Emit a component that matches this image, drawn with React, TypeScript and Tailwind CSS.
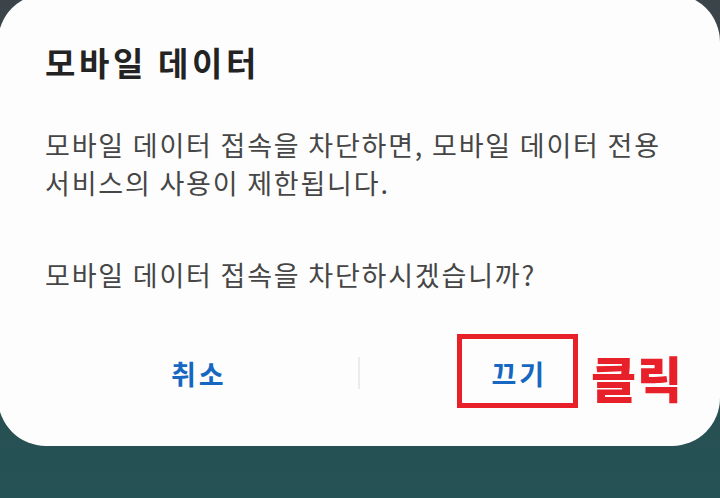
import React from "react";

const font = { fontFamily: '"Noto Sans CJK KR", "Noto Sans", sans-serif' };

export default function App() {
  return (
    <div
      className="w-[720px] h-[498px] overflow-hidden bg-gradient-to-b from-[#3b4449] via-[#2f4b4f] to-[#245255]"
      style={font}
    >
      <div className="-mt-[6px] -ml-[2px] w-[722px] h-[452px] bg-[#fdfdfd] rounded-[48px] flex flex-col pl-[47px] pr-[40px]">
        <h1 className="mt-[52px] text-[33px] leading-none font-bold text-[#232323] tracking-[3.6px]">
          모바일 데이터
        </h1>
        <p className="mt-[47px] text-[27px] leading-[38px] text-[#464646] tracking-[1.8px]">
          모바일 데이터 접속을 차단하면, 모바일 데이터 전용
          <br />
          서비스의 사용이 제한됩니다.
        </p>
        <p className="mt-[54px] text-[27px] leading-[38px] text-[#464646] tracking-[1.8px]">
          모바일 데이터 접속을 차단하시겠습니까?
        </p>
        <div className="mt-[63px] flex items-center -ml-[8px]">
          <div className="flex-1 flex justify-center">
            <span className="text-[27px] leading-none font-bold text-[#1667c1] tracking-[3px] pl-[3px]">취소</span>
          </div>
          <div className="w-[2px] h-[32px] bg-[#ececec]" />
          <div className="flex-1 flex justify-center">
            <span className="text-[27px] leading-none font-bold text-[#1667c1] tracking-[3px] pl-[3px] -ml-[4px]">끄기</span>
          </div>
        </div>
      </div>
      <div className="absolute left-[457px] top-[334px] w-[121px] h-[74px] border-[5px] border-[#e8202a]" />
      <div className="absolute left-[591px] top-[352px] text-[49px] leading-none font-black text-[#e8202a] tracking-[1px]">
        클릭
      </div>
    </div>
  );
}
